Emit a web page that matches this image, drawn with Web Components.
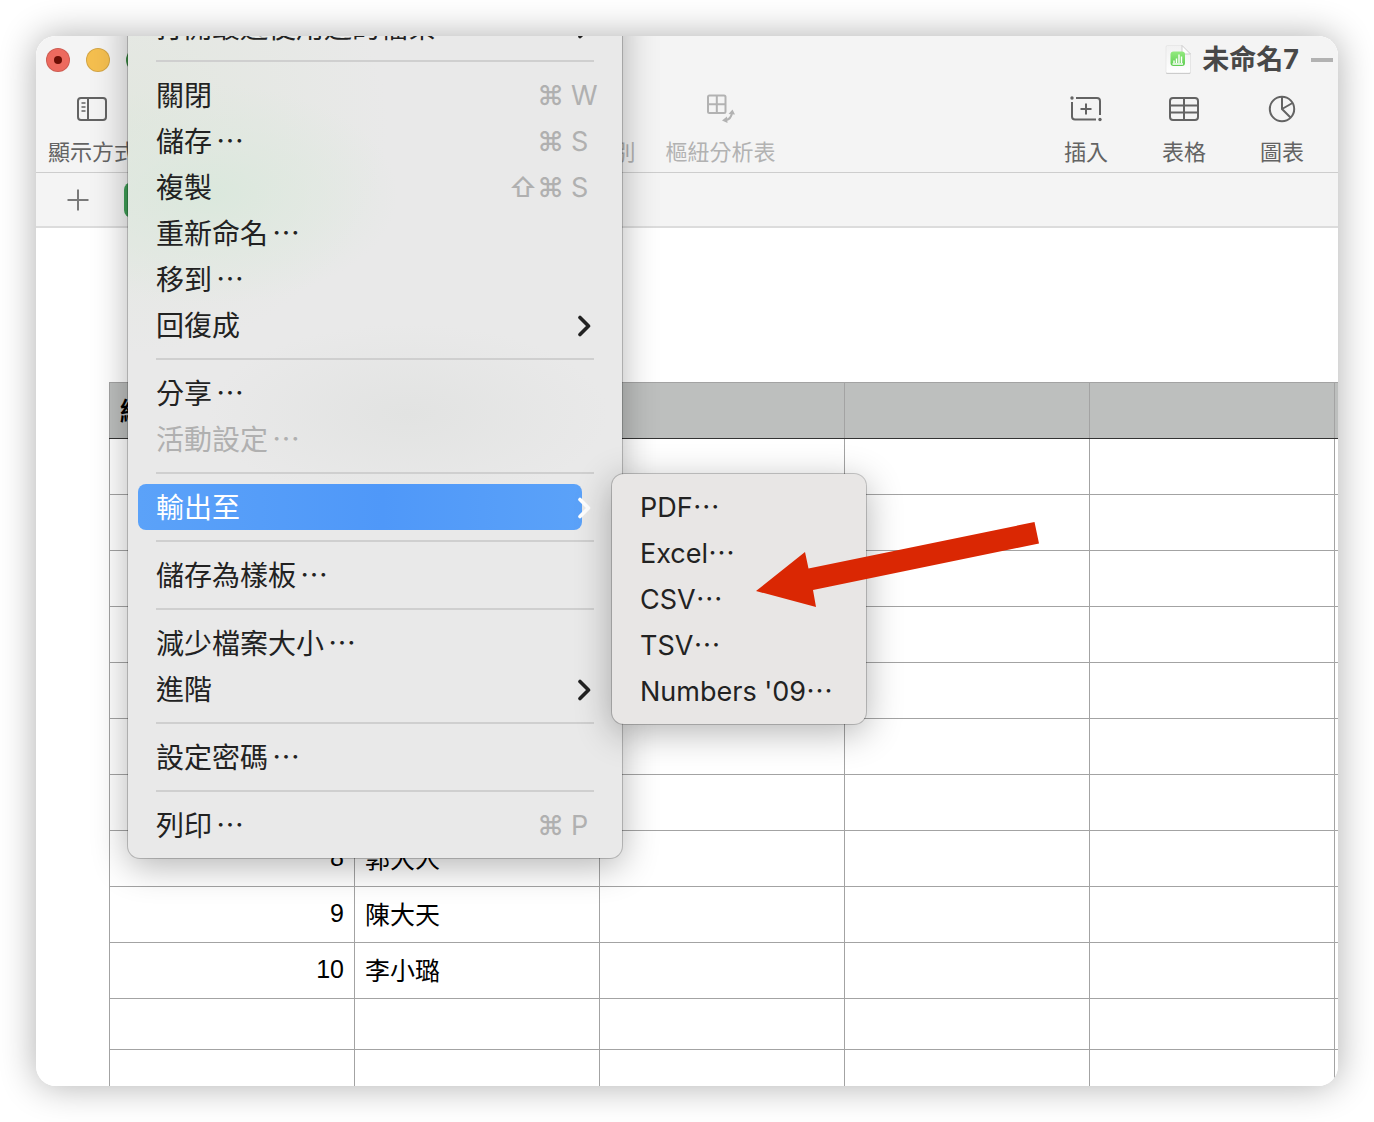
<!DOCTYPE html>
<html lang="zh-Hant">
<head>
<meta charset="utf-8">
<title>未命名7</title>
<style>
  html, body { height: 100%; }
  body { margin: 0; background: #fff; overflow: hidden; font-family: Inter, "Noto Sans CJK TC", sans-serif; }
  .more { margin-left: 4px; }
</style>
</head>
<body>
<mac-window>
  <title-bar slot="chrome">未命名7</title-bar>
  <tool-bar slot="chrome">
    <tool-item icon="sidebar">顯示方式</tool-item>
    <tool-item slot="middle" dim icon="list">類別</tool-item>
    <tool-item slot="middle" dim icon="pivot">樞紐分析表</tool-item>
    <tool-item slot="end" icon="insert">插入</tool-item>
    <tool-item slot="end" icon="table">表格</tool-item>
    <tool-item slot="end" icon="chart">圖表</tool-item>
  </tool-bar>
  <sheet-tabs slot="chrome"></sheet-tabs>
  <sheet-table></sheet-table>
  <menu-panel slot="overlay" class="file">
    <menu-item submenu>打開最近使用過的檔案</menu-item>
    <menu-line></menu-line>
    <menu-item mod="⌘" key="W">關閉</menu-item>
    <menu-item mod="⌘" key="S">儲存<span class="more">⋯</span></menu-item>
    <menu-item mod="⇧⌘" key="S">複製</menu-item>
    <menu-item>重新命名<span class="more">⋯</span></menu-item>
    <menu-item>移到<span class="more">⋯</span></menu-item>
    <menu-item submenu>回復成</menu-item>
    <menu-line></menu-line>
    <menu-item>分享<span class="more">⋯</span></menu-item>
    <menu-item disabled>活動設定<span class="more">⋯</span></menu-item>
    <menu-line></menu-line>
    <menu-item submenu selected>輸出至</menu-item>
    <menu-line></menu-line>
    <menu-item>儲存為樣板<span class="more">⋯</span></menu-item>
    <menu-line></menu-line>
    <menu-item>減少檔案大小<span class="more">⋯</span></menu-item>
    <menu-item submenu>進階</menu-item>
    <menu-line></menu-line>
    <menu-item>設定密碼<span class="more">⋯</span></menu-item>
    <menu-line></menu-line>
    <menu-item mod="⌘" key="P">列印<span class="more">⋯</span></menu-item>
  </menu-panel>
  <menu-panel slot="overlay" class="export">
    <menu-item>PDF⋯</menu-item>
    <menu-item>Excel⋯</menu-item>
    <menu-item>CSV⋯</menu-item>
    <menu-item>TSV⋯</menu-item>
    <menu-item>Numbers '09⋯</menu-item>
  </menu-panel>
  <pointer-arrow slot="overlay"></pointer-arrow>
</mac-window>

<script>
const define = (name, html, setup) => {
  const template = document.createElement('template');
  template.innerHTML = html;
  customElements.define(name, class extends HTMLElement {
    constructor() {
      super();
      this.attachShadow({ mode: 'open' }).append(template.content.cloneNode(true));
    }
    connectedCallback() { if (setup) setup(this, this.shadowRoot); }
  });
};

define('mac-window', `
<style>
  :host { display: block; box-sizing: border-box; height: 100vh; padding: 36px; }
  main { position: relative; height: 100%; overflow: hidden; border-radius: 20px; background: #fff; display: flex; flex-direction: column; }
  .shadow { height: 100%; border-radius: 20px; box-shadow: 0 0 36px rgba(0,0,0,.32); }
  ::slotted(.file) { position: absolute; left: 92px; top: -42px; width: 494px;
    background: radial-gradient(ellipse 190px 110px at 80px 200px, #d8e8dbcc, #dde8deaa 40%, #d8e8db00),
                radial-gradient(ellipse 260px 230px at 0px 130px, #e2e7df, #e2e7df00),
                radial-gradient(ellipse 200px 90px at 280px 420px, #e2e3e2, #e3e3e300), #e9e9e9; }
  ::slotted(.export) { position: absolute; left: 576px; top: 438px; width: 254px; background: #e8e6e5; --menu-size: 27px; }
  ::slotted(pointer-arrow) { position: absolute; left: 720px; top: 486px; }
</style>
<div class="shadow"><main>
  <header><slot name="chrome"></slot></header>
  <slot></slot>
  <slot name="overlay"></slot>
</main></div>`);

define('title-bar', `
<style>
  :host { display: flex; align-items: center; justify-content: space-between; height: 48px; padding: 0 5px 0 10px; background: #f4f4f4; color: #484848; }
  .lights, .title { display: flex; align-items: center; }
  .lights { gap: 16px; }
  button { width: 24px; height: 24px; padding: 0; border: 1px solid #0002; border-radius: 50%; display: grid; place-items: center; }
  .close { background: #ed6a5e; } .min { background: #f5bf4f; } .zoom { background: #43a04d; }
  .close::after { content: ""; width: 8px; height: 8px; border-radius: 50%; background: #6b0f05; }
  svg { margin-right: 10px; }
  h1 { margin: 0; font: bold 27px/40px Inter, "Noto Sans CJK TC", sans-serif; }
  .dash { margin-left: 12px; width: 22px; height: 4px; background: #b2b2b2; }
</style>
<div class="lights"><button class="close" aria-label="關閉"></button><button class="min" aria-label="縮小"></button><button class="zoom" aria-label="放大"></button></div>
<div class="title">
  <svg width="27" height="30" viewBox="0 0 27 30">
    <defs>
      <linearGradient id="g" x2="0" y2="1"><stop stop-color="#93ea7f"/><stop offset="1" stop-color="#5fce52"/></linearGradient>
      <linearGradient id="p" x2="0" y2="1"><stop stop-color="#f1f1f1"/><stop offset="1" stop-color="#fff"/></linearGradient>
    </defs>
    <path d="M1 3Q1 1.500 2.500 1.500H17L25.500 10V27.500Q25.500 29 24 29H2.500Q1 29 1 27.500Z" fill="#c4c4c4"/>
    <path d="M1 2Q1 .5 2.500 .5H17L25.500 9V26.500Q25.500 28 24 28H2.500Q1 28 1 26.500Z" fill="url(#p)" stroke="#e0e0e0" stroke-width=".6"/>
    <path d="M17 .5V7.500Q17 9 18.500 9H25.500Z" fill="#fff" stroke="#c4c4c4" stroke-width=".8"/>
    <rect x="5.500" y="6.500" width="14.500" height="14.500" rx="3" fill="url(#g)"/>
    <path d="M9 18V15.500M11.500 18V13.500M14 18V9.500M16.500 18V11.500M7.500 19H18" stroke="#fff" stroke-width="1.400" fill="none"/>
  </svg>
  <h1><slot></slot></h1><span class="dash"></span>
</div>`);

define('tool-bar', `
<style>
  :host { display: flex; height: 88px; padding: 0 34px 0 12px; background: #f4f4f4; border-bottom: 1px solid #cdcdcd; }
  nav { display: flex; }
  .middle { gap: 30px; } .end { gap: 54px; }
  .a { flex: 455; } .b { flex: 288; }
</style>
<nav><slot></slot></nav><span class="a"></span><nav class="middle"><slot name="middle"></slot></nav><span class="b"></span><nav class="end"><slot name="end"></slot></nav>`);

const icons = {
  sidebar: '<rect x="3" y="6" width="28" height="22" rx="3"/><path d="M13 6V28"/><path d="M6.500 11H10.500M6.500 15H10.500M6.500 19H10.500" stroke-width="1.400"/>',
  list: '<path d="M10 9H24M10 17H24M10 25H24"/>',
  pivot: '<rect x="4" y="3.500" width="17.500" height="17.500" rx="1.500"/><path d="M12.800 3.500V21M4 12.300H21.500"/><path d="M28 21Q27 27 22 28"/><path d="M24.500 22L28.500 17.500L31 22.500ZM23 24.500L18 28.500L23.500 31Z" fill="currentColor" stroke="none"/>',
  insert: '<path d="M7 6H28Q31 6 31 9V23M27 27.500H6Q3 27.500 3 24.500V10"/><path d="M17 11.500V22.500M11.500 17H22.500"/><circle cx="3" cy="6" r="1.700" fill="currentColor" stroke="none"/><circle cx="31" cy="27.500" r="1.700" fill="currentColor" stroke="none"/>',
  table: '<rect x="3" y="6" width="28" height="22" rx="3"/><path d="M17 6V28M3 13.500H31M3 20.500H31"/>',
  chart: '<circle cx="17" cy="17" r="12.200"/><path d="M17 4.800V17L25.500 25.500M17 17L27.500 11"/>'
};
define('tool-item', `
<style>
  :host { display: block; color: #636363; }
  :host([dim]) { color: #b2b2b2; }
  button { display: flex; flex-direction: column; align-items: center; gap: 8px; padding: 8px 0 0; border: 0; background: none; color: inherit; font: 22px/32px "Noto Sans CJK TC", sans-serif; white-space: nowrap; }
  svg { fill: none; stroke: currentColor; stroke-width: 2; }
</style>
<button><svg width="34" height="34" viewBox="0 0 34 34"></svg><span><slot></slot></span></button>`,
(host, root) => { root.querySelector('svg').innerHTML = icons[host.getAttribute('icon')]; });

define('sheet-tabs', `
<style>
  :host { display: flex; align-items: center; gap: 25px; height: 53px; padding: 0 20px; background: #f4f4f4; border-bottom: 2px solid #dcdcdc; }
  button { border: 0; padding: 0; background: none; }
  .add { width: 43px; height: 43px; display: grid; place-items: center; }
  .tab { width: 180px; height: 36px; border-radius: 8px; background: #3f9f57; }
</style>
<button class="add" aria-label="加入工作表"><svg width="22" height="22" viewBox="0 0 22 22"><path d="M11 .5V21.500M.5 11H21.500" stroke="#7a7a7a" stroke-width="2"/></svg></button>
<button class="tab" aria-label="工作表"></button>`);

define('sheet-table', `
<style>
  :host { display: block; flex: 1; min-height: 0; overflow: hidden; padding: 154px 0 0 73px; }
  table { width: 1471px; table-layout: fixed; border-collapse: collapse; color: #000; font: 25px/36px "Liberation Sans", "Noto Sans CJK TC", sans-serif; }
  th, td { box-sizing: border-box; height: 56px; padding: 0 10px; border: 1px solid #a3a3a3; text-align: left; white-space: nowrap; overflow: hidden; }
  th { background: #bdbfbe; border-bottom-color: #333; }
  td:first-child { text-align: right; padding-bottom: 4px; }
  .short td { height: 51px; }
</style>
<table><thead><tr></tr></thead><tbody></tbody></table>`,
(host, root) => {
  const blanks = (tag, n) => ('<' + tag + '></' + tag + '>').repeat(n);
  root.querySelector('thead tr').innerHTML = '<th>編</th>' + blanks('th', 5);
  const named = [['8', '郭大人'], ['9', '陳大天'], ['10', '李小璐']];
  root.querySelector('tbody').innerHTML =
    ('<tr>' + blanks('td', 6) + '</tr>').repeat(7) +
    named.map(([n, name]) => '<tr><td>' + n + '</td><td>' + name + '</td>' + blanks('td', 4) + '</tr>').join('') +
    ('<tr class="short">' + blanks('td', 6) + '</tr>').repeat(3);
});

define('menu-panel', `
<style>
  :host { display: block; box-sizing: border-box; padding: 10px 0; border-radius: 12px; box-shadow: 0 0 0 1px rgba(0,0,0,.2), 0 8px 36px rgba(0,0,0,.3); }
</style>
<div role="menu"><slot></slot></div>`);

define('menu-line', `
<style>
  :host { display: block; height: 2px; margin: 10px 28px; background: #cfcfcf; }
</style>`);

define('menu-item', `
<style>
  :host { display: block; color: #222; }
  :host([disabled]) { color: #b0b0b0; }
  :host([selected]) { color: #fff; }
  button { box-sizing: border-box; position: relative; display: flex; align-items: center; width: 100%; height: 46px; padding: 2px 25px 0 28px; border: 0; background: none; color: inherit; font: var(--menu-size, 28px)/44px Inter, "Noto Sans CJK TC", sans-serif; text-align: left; white-space: nowrap; }
  :host([selected]) button::before { content: ""; position: absolute; inset: 0 40px 0 10px; border-radius: 8px; background: linear-gradient(90deg, #5ba2f9, #4f98f9 55%, #5ba2f9); }
  .label { position: relative; flex: 1; }
  .mod, .key { color: #b0b0b0; font-size: 27px; }
  .mod { margin-right: 7px; font-weight: 500; }
  .key { width: 26px; }
  svg { position: relative; margin-right: 5px; }
</style>
<button role="menuitem"><span class="label"><slot></slot></span></button>`,
(host, root) => {
  const button = root.querySelector('button');
  button.disabled = host.hasAttribute('disabled');
  if (host.hasAttribute('submenu')) {
    button.insertAdjacentHTML('beforeend', '<svg width="16" height="22" viewBox="0 0 16 22"><path d="M4 2.500L12.500 11L4 19.500" fill="none" stroke="currentColor" stroke-width="3.600" stroke-linecap="round" stroke-linejoin="round"/></svg>');
  }
  if (host.hasAttribute('key')) {
    button.insertAdjacentHTML('beforeend', '<span class="mod">' + host.getAttribute('mod') + '</span><span class="key">' + host.getAttribute('key') + '</span>');
  }
});

define('pointer-arrow', `
<style>:host { display: block; } svg { display: block; }</style>
<svg width="284" height="86" viewBox="0 0 284 86"><path d="M0 69L49 30L52.500 46.500L278.500 0L283 21.500L57 68L60 85Z" fill="#da2703"/></svg>`);
</script>
</body>
</html>
